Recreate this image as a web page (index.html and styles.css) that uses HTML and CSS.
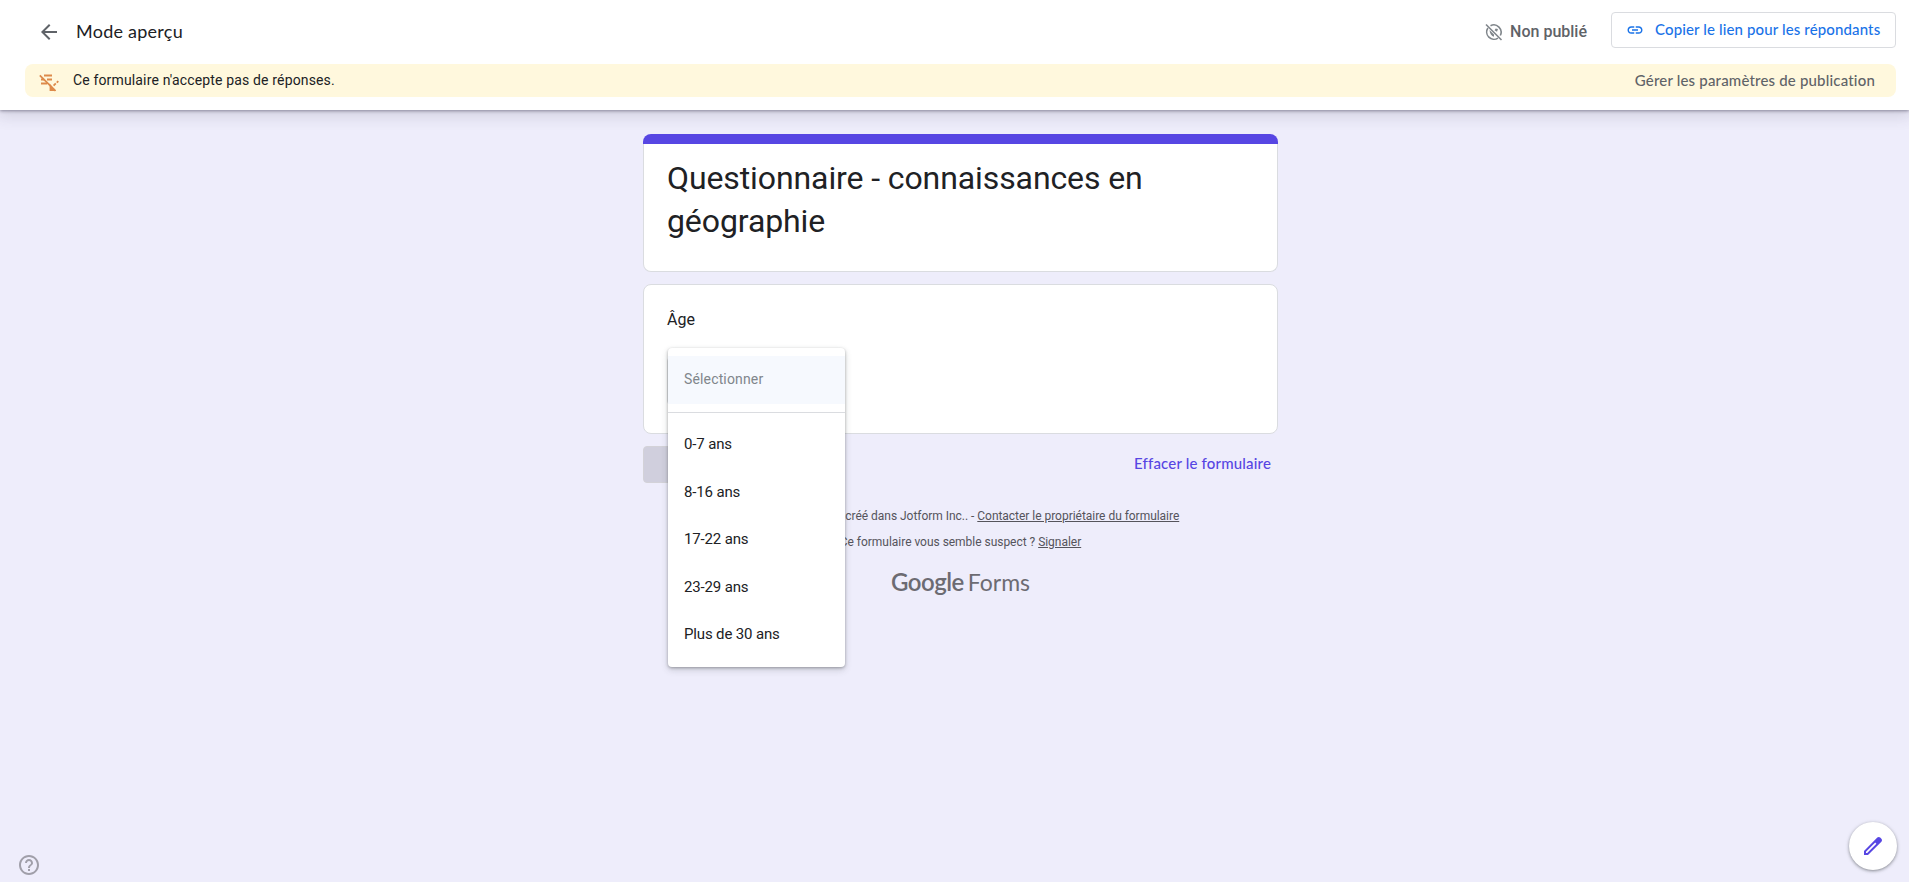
FILE: index.html
```html
<!DOCTYPE html>
<html lang="fr">
<head>
    <meta charset="UTF-8">
    <meta name="viewport" content="width=device-width, initial-scale=1.0">
    <title>Questionnaire - connaissances en géographie</title>
    <link rel="stylesheet" href="styles.css">
</head>
<body>

    <header class="header">
        <div class="toolbar">
            <svg class="back-icon" viewBox="0 0 24 24"><path d="M20 11H7.830l5.590-5.590L12 4l-8 8 8 8 1.410-1.410L7.830 13H20v-2z"/></svg>
            <span class="mode">Mode aperçu</span>
            <div class="status">
                <svg class="status-icon" viewBox="0 0 18 18">
                    <path d="M5.500 2.700A7.300 7.300 0 0 1 15.300 12.500M13 15.100A7.300 7.300 0 0 1 2.900 5"/>
                    <path d="M1 1.500l15.500 15.500"/>
                    <path class="fill" d="M4.500 7l4.500 4.500v2.300C6.500 13 4.800 10.500 4.500 7zM9.500 7.200l1.200-1.700 2.300.6-1 2.600z"/>
                </svg>
                <span>Non publié</span>
            </div>
            <button class="copy-button">
                <svg class="link-icon" viewBox="0 0 24 24"><path d="M3.900 12c0-1.710 1.390-3.100 3.100-3.100h4V7H7c-2.760 0-5 2.240-5 5s2.240 5 5 5h4v-1.900H7c-1.710 0-3.100-1.390-3.100-3.100zM8 13h8v-2H8v2zm9-6h-4v1.900h4c1.710 0 3.100 1.390 3.100 3.100s-1.390 3.100-3.100 3.100h-4V17h4c2.760 0 5-2.240 5-5s-2.240-5-5-5z"/></svg>
                <span>Copier le lien pour les répondants</span>
            </button>
        </div>
        <div class="banner">
            <svg class="banner-icon" viewBox="0 0 20 18">
                <path d="M5 1.500H13M8 5.500h5M2 5.500h3M2 9.500h6"/>
                <path class="slash" d="M.8 1.300L16.500 16.800"/>
                <path class="pen" d="M14.600 11.600l2.200-2.200M17.800 8.600l1.500-1.500M11.500 12v4h3.500z"/>
            </svg>
            <span class="banner-text">Ce formulaire n'accepte pas de réponses.</span>
            <span class="banner-link">Gérer les paramètres de publication</span>
        </div>
    </header>

    <main class="form">
        <div class="title-bar"></div>
        <div class="card title-card">
            <h1>Questionnaire - connaissances en géographie</h1>
        </div>

        <div class="card question-card">
            <div class="question">Âge</div>
            <div class="select">
                <div class="menu">
                    <div class="option placeholder">Sélectionner</div>
                    <div class="separator"></div>
                    <div class="option">0-7 ans</div>
                    <div class="option">8-16 ans</div>
                    <div class="option">17-22 ans</div>
                    <div class="option">23-29 ans</div>
                    <div class="option">Plus de 30 ans</div>
                </div>
            </div>
        </div>

        <div class="actions">
            <div class="submit"></div>
            <span class="clear">Effacer le formulaire</span>
        </div>

        <footer class="footer">
            <p>Ce formulaire a été créé dans Jotform Inc.. - <a>Contacter le propriétaire du formulaire</a></p>
            <p>Ce formulaire vous semble suspect ? <a>Signaler</a></p>
            <div class="logo"><span class="logo-google">Google</span><span class="logo-forms">Forms</span></div>
        </footer>
    </main>

    <div class="help">
        <svg viewBox="0 0 24 24"><path d="M11 18h2v-2h-2v2zm1-16C6.480 2 2 6.480 2 12s4.480 10 10 10 10-4.480 10-10S17.520 2 12 2zm0 18c-4.410 0-8-3.590-8-8s3.590-8 8-8 8 3.590 8 8-3.590 8-8 8zm0-14c-2.210 0-4 1.790-4 4h2c0-1.100.9-2 2-2s2 .9 2 2c0 2-3 1.750-3 5h2c0-2.250 3-2.500 3-5 0-2.210-1.790-4-4-4z"/></svg>
    </div>
    <div class="edit">
        <svg viewBox="0 0 24 24"><path d="M20.400 4.800l-1.200-1.200c-.8-.8-2.100-.8-2.900 0L3 17v4h4L20.400 7.700c.8-.8.8-2.100 0-2.900zM6.200 19H5v-1.200l9.200-9.200 1.200 1.200L6.200 19z"/></svg>
    </div>

</body>
</html>
```
FILE: styles.css
```css
body {
    margin: 0;
    height: 882px;
    overflow: hidden;
    background-color: #eeedfb;
    color: #202124;
    font-family: Roboto, Arial, sans-serif;
}

/* Header */
.header {
    position: relative;
    box-sizing: border-box;
    height: 110px;
    padding: 0 13px 0 25px;
    background-color: white;
    box-shadow: 0 1px 3px rgba(60, 55, 80, 0.5), 0 4px 14px 2px rgba(60, 55, 80, 0.16);
}
.toolbar {
    display: flex;
    align-items: center;
    height: 64px;
}
.back-icon {
    width: 24px;
    height: 24px;
    margin-left: 12px;
    fill: #5f6368;
}
.mode {
    margin: 0 0 3px 15px;
    font-family: Lato, sans-serif;
    font-size: 18px;
    letter-spacing: 0.25px;
}
.status {
    display: flex;
    align-items: center;
    margin-left: auto;
    color: #5f6368;
    font-size: 16px;
    font-weight: 500;
}
.status span {
    margin-bottom: 2px;
}
.status-icon {
    width: 18px;
    height: 18px;
    margin-right: 7px;
    fill: none;
    stroke: #80868b;
    stroke-width: 1.6;
}
.status-icon .fill {
    fill: #80868b;
    stroke: none;
}
.copy-button {
    display: flex;
    align-items: center;
    box-sizing: border-box;
    width: 285px;
    height: 36px;
    margin: 0 0 4px 24px;
    padding: 0 14px;
    border: 1px solid #dadce0;
    border-radius: 4px;
    background-color: white;
    color: #1a73e8;
    font-family: Lato, sans-serif;
    font-size: 15px;
    font-weight: 500;
    letter-spacing: 0.13px;
    white-space: nowrap;
}
.copy-button span {
    margin-bottom: 2px;
}
.link-icon {
    width: 18px;
    height: 18px;
    margin: 0 11px 1px 0;
    fill: #1a73e8;
}
.banner {
    display: flex;
    align-items: center;
    height: 33px;
    border-radius: 8px;
    background-color: #fff8dd;
}
.banner-icon {
    width: 20px;
    height: 18px;
    margin: 4px 0 0 14px;
    fill: none;
    stroke: #dd8a4a;
    stroke-width: 1.8;
}
.banner-text {
    margin: 0 0 2px 14px;
    font-size: 14px;
    letter-spacing: 0.15px;
}
.banner-link {
    margin: 0 21px 2px auto;
    color: #5f6368;
    font-family: Lato, sans-serif;
    font-size: 15px;
    font-weight: 500;
    letter-spacing: 0.18px;
}

/* Form */
.form {
    width: 635px;
    margin: 24px auto 0;
    padding-left: 12px;
}
.title-bar {
    height: 10px;
    border-radius: 8px 8px 0 0;
    background-color: #5746e3;
}
.card {
    box-sizing: border-box;
    padding: 0 24px;
    border: 1px solid #dadce0;
    border-radius: 8px;
    background-color: white;
}
.title-card {
    height: 128px;
    padding-top: 13px;
    border-top: none;
    border-radius: 0 0 8px 8px;
}
.title-card h1 {
    margin: 0 0 0 -1px;
    font-size: 32px;
    font-weight: 400;
    letter-spacing: -0.1px;
    line-height: 43px;
}
.question-card {
    height: 150px;
    margin-top: 12px;
    padding-top: 23px;
}
.question {
    margin-left: -1px;
    font-size: 16px;
    line-height: 24px;
}
.select {
    position: relative;
    box-sizing: border-box;
    width: 177px;
    height: 48px;
    margin: 25px 0 0 -1px;
    border: 1px solid #dadce0;
    border-radius: 4px;
}
.menu {
    position: absolute;
    top: -10px;
    left: 0;
    box-sizing: border-box;
    width: 177px;
    height: 319px;
    padding-top: 8px;
    border-radius: 4px;
    background-color: white;
    box-shadow: 0 1px 3px rgba(60, 64, 67, 0.4), 0 3px 7px rgba(60, 64, 67, 0.2);
}
.option {
    height: 47.500px;
    padding-left: 16px;
    font-size: 15px;
    letter-spacing: -0.15px;
    line-height: 49px;
}
.placeholder {
    height: 48px;
    background-color: #f6f9fe;
    color: #80868b;
    font-size: 14px;
    letter-spacing: 0.15px;
    line-height: 47px;
}
.separator {
    margin: 8px 0 7px;
    border-top: 1px solid #dadce0;
}
.actions {
    display: flex;
    justify-content: space-between;
    margin-top: 12px;
}
.submit {
    box-sizing: border-box;
    width: 90px;
    height: 37px;
    border: 1px solid #d3d2d8;
    border-radius: 4px;
    background-color: #d0cfdd;
}
.clear {
    margin-right: 7px;
    color: #5746e3;
    font-family: Lato, sans-serif;
    font-size: 15px;
    font-weight: 500;
    letter-spacing: 0.17px;
    line-height: 34px;
}

/* Footer */
.footer {
    margin-top: 20px;
    color: #55545c;
    font-size: 12px;
    letter-spacing: -0.03px;
    text-align: center;
}
.footer p {
    margin: 0;
    line-height: 26px;
}
.footer a {
    text-decoration: underline;
}
.logo {
    display: flex;
    align-items: baseline;
    justify-content: center;
    margin-top: 12px;
    color: #6c6b72;
    font-family: Lato, sans-serif;
    font-size: 23px;
    line-height: 30px;
}
.logo-google {
    margin-right: 4px;
    font-size: 24px;
    font-weight: 600;
    letter-spacing: -0.5px;
}

/* Floating buttons */
.help {
    position: fixed;
    left: 17px;
    bottom: 5px;
    width: 24px;
    height: 24px;
}
.help svg {
    width: 24px;
    height: 24px;
    fill: #a09fa9;
}
.edit {
    position: fixed;
    right: 12px;
    bottom: 12px;
    display: flex;
    align-items: center;
    justify-content: center;
    width: 48px;
    height: 48px;
    border-radius: 50%;
    background-color: white;
    box-shadow: 0 1px 3px rgba(60, 64, 67, 0.5), 0 1px 5px rgba(60, 64, 67, 0.12);
}
.edit svg {
    width: 24px;
    height: 24px;
    fill: #5746e3;
}
```
